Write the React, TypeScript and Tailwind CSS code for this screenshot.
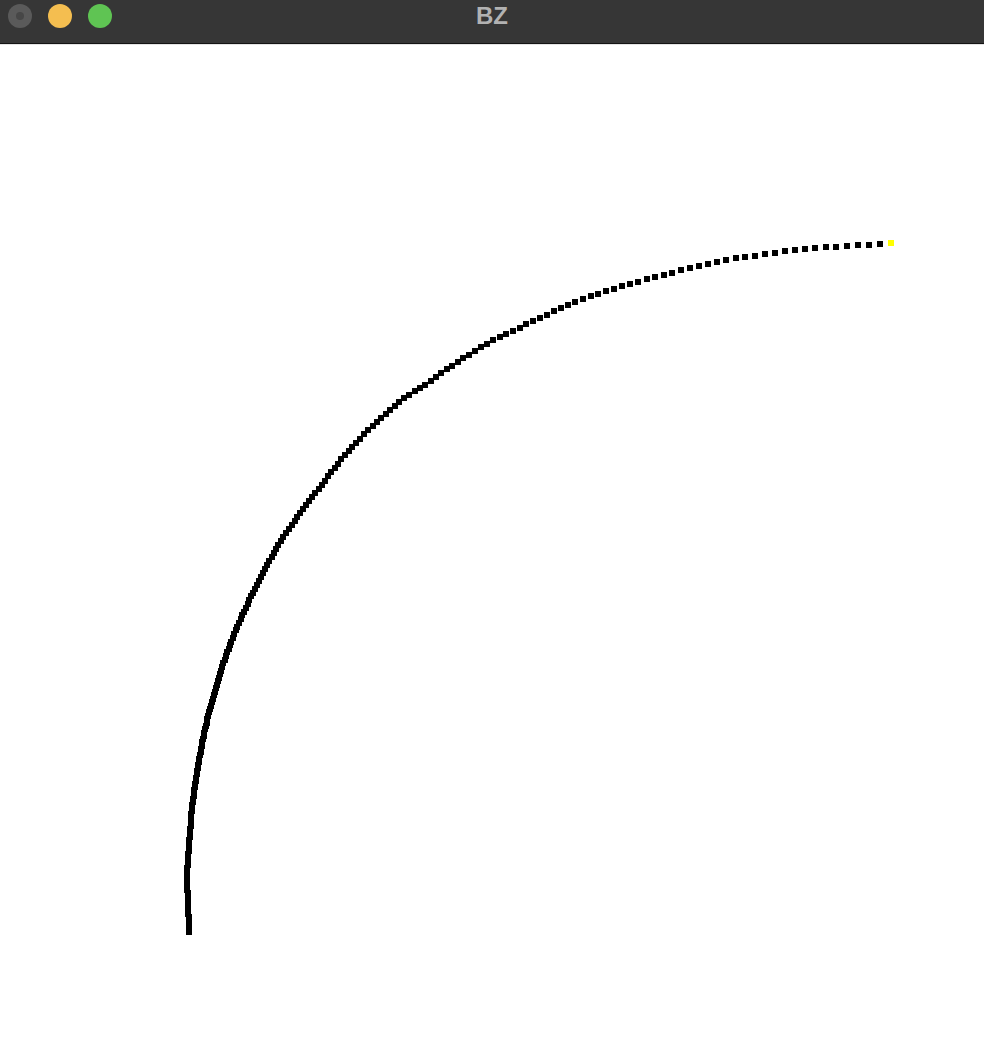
import { useMemo } from "react";

type Pt = [number, number];

// hand-picked centres along the drawn curve, in page pixels
const KNOTS: Pt[] = [
  [189, 932],
  [188, 902],
  [187, 880],
  [188, 860],
  [190, 833],
  [193, 800],
  [201, 750],
  [208, 717],
  [218, 683],
  [227, 653],
  [248, 603],
  [275, 551],
  [294, 522],
  [323, 483],
  [353, 446],
  [396, 405],
  [426, 384],
  [450, 367],
  [475, 351],
  [500, 337],
  [523, 326],
  [550, 313],
  [581, 300],
  [613, 289],
  [648, 279],
  [675, 272],
  [720, 261],
  [760, 255],
  [800, 249],
  [850, 246],
  [891, 243],
];

function catmull(p0: Pt, p1: Pt, p2: Pt, p3: Pt, t: number): Pt {
  const t2 = t * t;
  const t3 = t2 * t;
  const f = (a: number, b: number, c: number, d: number) =>
    0.5 * (2 * b + (-a + c) * t + (2 * a - 5 * b + 4 * c - d) * t2 + (-a + 3 * b - 3 * c + d) * t3);
  return [f(p0[0], p1[0], p2[0], p3[0]), f(p0[1], p1[1], p2[1], p3[1])];
}

function buildDots(): Pt[] {
  const dense: Pt[] = [];
  for (let i = 0; i < KNOTS.length - 1; i++) {
    const p0 = KNOTS[Math.max(0, i - 1)];
    const p1 = KNOTS[i];
    const p2 = KNOTS[i + 1];
    const p3 = KNOTS[Math.min(KNOTS.length - 1, i + 2)];
    for (let k = 0; k < 40; k++) dense.push(catmull(p0, p1, p2, p3, k / 40));
  }
  dense.push(KNOTS[KNOTS.length - 1]);

  const acc: number[] = [0];
  for (let i = 1; i < dense.length; i++) {
    const dx = dense[i][0] - dense[i - 1][0];
    const dy = dense[i][1] - dense[i - 1][1];
    acc.push(acc[i - 1] + Math.hypot(dx, dy));
  }
  const total = acc[acc.length - 1];

  const at = (s: number): Pt => {
    let i = 1;
    while (i < acc.length - 1 && acc[i] < s) i++;
    const seg = acc[i] - acc[i - 1] || 1;
    const f = (s - acc[i - 1]) / seg;
    return [
      dense[i - 1][0] + (dense[i][0] - dense[i - 1][0]) * f,
      dense[i - 1][1] + (dense[i][1] - dense[i - 1][1]) * f,
    ];
  };

  // walk back from the end so the last gap sits right before the yellow dot
  const dots: Pt[] = [];
  let s = total;
  while (s > 0) {
    dots.push(at(s));
    const u = s / total;
    s -= 2.6 + 8.6 * Math.pow(u, 1.4);
  }
  dots.push(at(0));
  return dots.reverse();
}

function TrafficLights() {
  return (
    <div className="flex h-8 items-center gap-4 pl-2">
      <div className="flex h-6 w-6 items-center justify-center rounded-full bg-[#5a5a5a]">
        <div className="h-2 w-2 rounded-full bg-[#474747]" />
      </div>
      <div className="h-6 w-6 rounded-full bg-[#f4be50]" />
      <div className="h-6 w-6 rounded-full bg-[#5fc453]" />
    </div>
  );
}

export default function App() {
  const dots = useMemo(buildDots, []);
  const last = dots[dots.length - 1];

  return (
    <div className="flex h-[1040px] w-[984px] flex-col bg-white font-['Liberation_Sans',Arial,sans-serif]">
      <div className="grid h-[44px] shrink-0 grid-cols-[1fr_auto_1fr] items-start border-b border-[#141414] bg-[#363636]">
        <TrafficLights />
        <div className="text-[24px] font-bold leading-8 text-[#b2b2b2]">BZ</div>
        <div />
      </div>
      <div className="h-px shrink-0 bg-[#e4e4e4]" />
      <svg
        className="block flex-1"
        width={984}
        height={995}
        viewBox="0 45 984 995"
        shapeRendering="crispEdges"
      >
        {dots.slice(0, -1).map(([x, y], i) => (
          <rect key={i} x={Math.round(x - 3)} y={Math.round(y - 3)} width={6} height={6} fill="#000" />
        ))}
        <rect x={Math.round(last[0] - 3)} y={Math.round(last[1] - 3)} width={6} height={6} fill="#ffff00" />
      </svg>
    </div>
  );
}
